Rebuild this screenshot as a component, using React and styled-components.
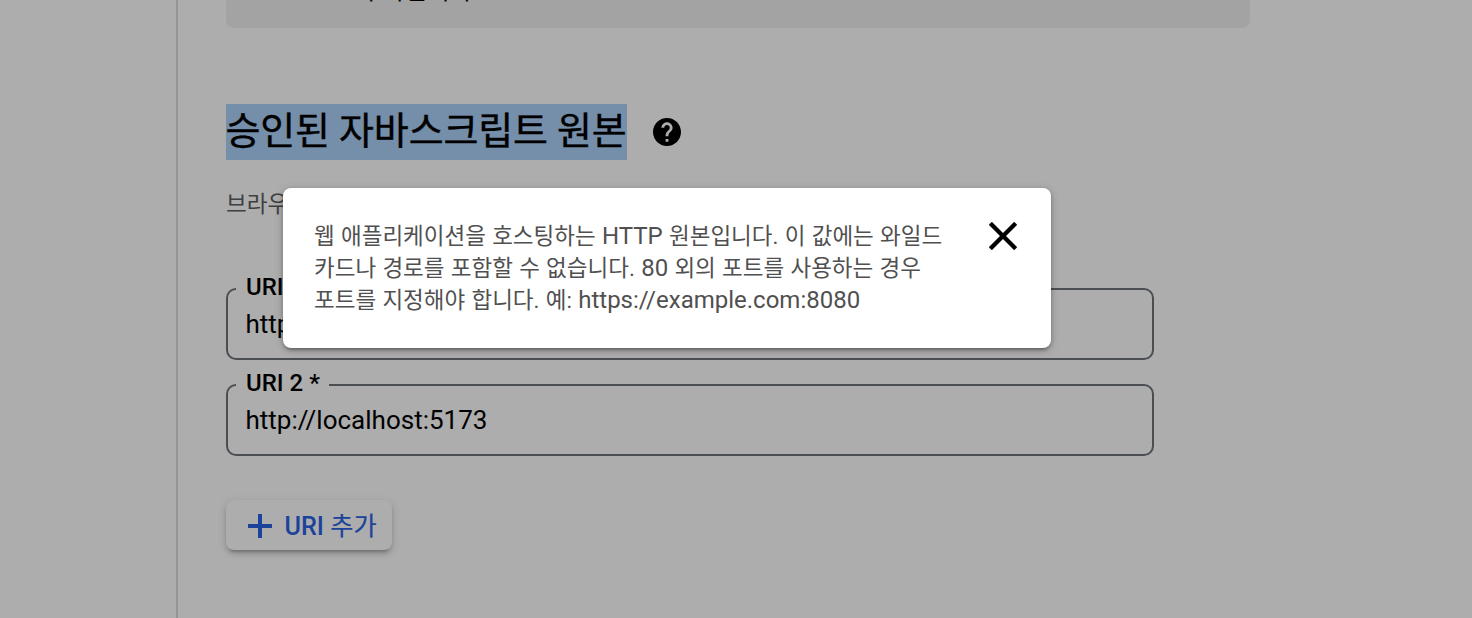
import React from "react";
import styled, { createGlobalStyle } from "styled-components";

const Global = createGlobalStyle`
  * { box-sizing: border-box; }
  body {
    margin: 0;
    background: #adadad;
    color: #000;
    font-family: Roboto, "Noto Sans CJK KR", sans-serif;
    overflow: hidden;
  }
`;

const Page = styled.div`
  display: flex;
  width: 1472px;
  height: 618px;
  overflow: hidden;
  position: relative;
`;

const SideRail = styled.aside`
  flex: none;
  width: 178px;
  border-right: 2px solid #969696;
`;

const Content = styled.main`
  width: 1072px;
  flex: none;
  padding-left: 48px;
  display: flex;
  flex-direction: column;
  align-items: flex-start;
`;

const InfoBox = styled.div`
  flex: none;
  width: 1024px;
  height: 28px;
  border-radius: 0 0 8px 8px;
  background: #a3a3a3;
  display: flex;
  align-items: flex-end;
  padding: 0 0 21px 134px;
  overflow: hidden;
  font-size: 24.4px;
  line-height: 32px;
  white-space: nowrap;
`;

const HeadingRow = styled.div`
  display: flex;
  align-items: center;
  gap: 26px;
  margin-top: 76px;
  height: 56px;
`;

const Heading = styled.h2`
  margin: 0;
  height: 56px;
  line-height: 54px;
  font-size: 38px;
  font-weight: 400;
  letter-spacing: -0.18px;
  text-indent: -0.5px;
  white-space: nowrap;
  background: #758ea9;
  -webkit-text-stroke: 0.4px #000;
`;

const Hint = styled.p`
  margin: 28px 0 0;
  height: 32px;
  line-height: 32px;
  font-size: 22.5px;
  color: #3f3f3f;
  white-space: nowrap;
`;

const Fields = styled.div`
  display: flex;
  flex-direction: column;
  gap: 12px;
  margin-top: 56px;
`;

const Field = styled.fieldset`
  margin: 0;
  min-width: 0;
  width: 928px;
  height: 84px;
  padding: 0 18px 0 17.5px;
  border: 2px solid #4b4f53;
  border-radius: 10px;
`;

const FieldLabel = styled.legend`
  margin-left: -9.5px;
  padding: 0 9px 0 10px;
  height: 26px;
  line-height: 22px;
  font-size: 24px;
  font-weight: 500;
  white-space: nowrap;
`;

const FieldValue = styled.div`
  margin-top: 6px;
  line-height: 32px;
  font-size: 26px;
  white-space: nowrap;
`;

const AddButton = styled.button`
  display: flex;
  align-items: center;
  gap: 12.5px;
  width: 166px;
  height: 50px;
  margin: 44px 0 0;
  padding: 2px 0 0 22px;
  border: 0;
  border-radius: 8px;
  background: #adadad;
  box-shadow: 0 6px 2px -4px rgba(0, 0, 0, 0.15), 0 4px 4px rgba(0, 0, 0, 0.13),
    0 2px 10px rgba(0, 0, 0, 0.12);
  color: #1c439b;
  font-family: inherit;
  font-size: 25.2px;
  font-weight: 500;
  white-space: nowrap;
`;

const AddLabel = styled.span`
  margin-top: 1px;
  line-height: 32px;
`;

const Popover = styled.div`
  position: absolute;
  left: 283px;
  top: 188px;
  width: 768px;
  height: 160px;
  display: flex;
  justify-content: space-between;
  padding: 32px 34px 30px 31px;
  border-radius: 8px;
  background: #fff;
  box-shadow: 0 4px 2px -2px rgba(0, 0, 0, 0.15), 0 2px 4px rgba(0, 0, 0, 0.25),
    0 2px 10px rgba(0, 0, 0, 0.16);
  color: #505050;
`;

const PopoverText = styled.div`
  font-size: 22.5px;
  word-spacing: 0.7px;
`;

const Line = styled.div`
  height: 32px;
  line-height: 32px;
  white-space: nowrap;
`;

const Latin = styled.span`
  font-size: 24px;
`;

const Hangul = styled.span`
  font-weight: 400;
  -webkit-text-stroke: 0.2px currentColor;
`;

const CloseButton = styled.button`
  width: 28px;
  height: 28px;
  margin-top: 2px;
  padding: 0;
  border: 0;
  background: none;
  color: #000;
  display: flex;
`;

const HelpIcon = () => (
  <svg width="28" height="28" viewBox="2 2 20 20" fill="currentColor">
    <path d="M12 2C6.48 2 2 6.48 2 12s4.48 10 10 10 10-4.48 10-10S17.52 2 12 2zm1 17h-2v-2h2v2zm2.07-7.75l-.9.92C13.45 12.9 13 13.5 13 15h-2v-.5c0-1.1.45-2.1 1.17-2.83l1.24-1.26c.37-.36.59-.86.59-1.41 0-1.1-.9-2-2-2s-2 .9-2 2H8c0-2.21 1.79-4 4-4s4 1.79 4 4c0 .88-.36 1.68-.93 2.25z" />
  </svg>
);

const PlusIcon = () => (
  <svg width="24" height="24" viewBox="0 0 24 24" fill="currentColor">
    <path d="M10 0h4v10h10v4H14v10h-4V14H0v-4h10z" />
  </svg>
);

const CloseIcon = () => (
  <svg width="28" height="28" viewBox="5 5 14 14" fill="currentColor" stroke="currentColor" strokeWidth="0.2">
    <path d="M19 6.41L17.59 5 12 10.59 6.41 5 5 6.41 10.59 12 5 17.59 6.41 19 12 13.41 17.59 19 19 17.59 13.41 12z" />
  </svg>
);

export default function App() {
  return (
    <>
      <Global />
      <Page>
        <SideRail />
        <Content>
          <InfoBox>추가됩니다.</InfoBox>
          <HeadingRow>
            <Heading>승인된 자바스크립트 원본</Heading>
            <HelpIcon />
          </HeadingRow>
          <Hint>브라우저 요청에 사용</Hint>
          <Fields>
            <Field>
              <FieldLabel>URI 1 *</FieldLabel>
              <FieldValue>http://localhost</FieldValue>
            </Field>
            <Field>
              <FieldLabel>URI 2 *</FieldLabel>
              <FieldValue>http://localhost:5173</FieldValue>
            </Field>
          </Fields>
          <AddButton>
            <PlusIcon />
            <AddLabel>
              URI <Hangul>추가</Hangul>
            </AddLabel>
          </AddButton>
        </Content>
        <Popover>
          <PopoverText>
            <Line>
              웹 애플리케이션을 호스팅하는 <Latin>HTTP</Latin> 원본입니다. 이 값에는 와일드
            </Line>
            <Line>
              카드나 경로를 포함할 수 없습니다. <Latin>80</Latin> 외의 포트를 사용하는 경우
            </Line>
            <Line>
              포트를 지정해야 합니다. 예: <Latin>https://example.com:8080</Latin>
            </Line>
          </PopoverText>
          <CloseButton aria-label="닫기">
            <CloseIcon />
          </CloseButton>
        </Popover>
      </Page>
    </>
  );
}
